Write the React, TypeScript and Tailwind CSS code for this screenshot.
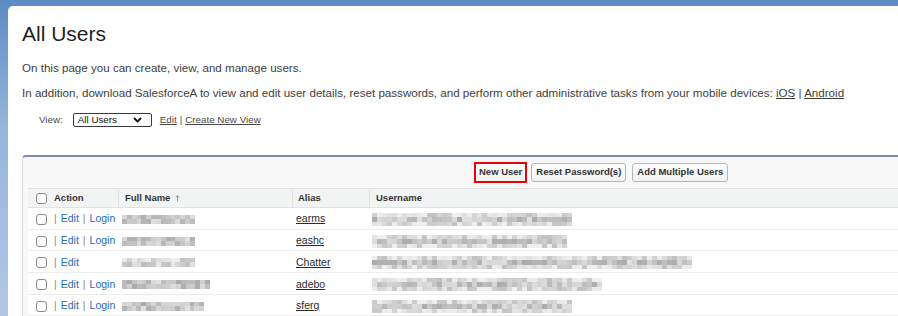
const users = [
  { login: true, alias: "earms", nameW: 73, userW: 200, seed: 3, light: false },
  { login: true, alias: "eashc", nameW: 73, userW: 195, seed: 7, light: false },
  { login: false, alias: "Chatter", nameW: 73, userW: 320, seed: 11, light: true },
  { login: true, alias: "adebo", nameW: 88, userW: 230, seed: 19, light: false },
  { login: true, alias: "sferg", nameW: 82, userW: 200, seed: 23, light: false },
];

// cheap deterministic noise so the blurred names look the same every render
function noise(seed: number, i: number) {
  const x = Math.sin(seed * 97.13 + i * 12.9898) * 43758.5453;
  return x - Math.floor(x);
}

function Pixels({ width, seed, bands, light }: { width: number; seed: number; bands: number[]; light: boolean }) {
  const cols = Math.ceil(width / 5);
  return (
    <div className="flex blur-[0.7px]" style={{ width }}>
      {Array.from({ length: cols }).map((_, c) => (
        <div key={c} className="flex flex-col w-[5px]">
          {bands.map((h, b) => {
            const edge = bands.length === 3 && b !== 1;
            let g = 170 + Math.round(noise(seed, c * 3 + b) * 55);
            if (edge) g = Math.min(238, g + 22);
            if (light) g = Math.min(238, g + 18);
            return <div key={b} style={{ height: h, backgroundColor: `rgb(${g},${g},${g})` }} />;
          })}
        </div>
      ))}
    </div>
  );
}

function Checkbox() {
  return <span className="inline-block w-[11px] h-[11px] border border-[#8a8a8a] rounded-[3px] bg-white" />;
}

export default function App() {
  return (
    <div className="w-[898px] h-[316px] overflow-hidden bg-linear-to-b from-[#5b8bc3] via-[#97b5da] via-40% to-[#b2c7e4] pt-[6px] pl-[8px] font-['Liberation_Sans',Arial,sans-serif]">
      <div className="h-full bg-white rounded-tl-[5px] pl-[14px] pt-[14px]">
        <h1 className="text-[21px] leading-[28px] text-[#1f1f1f]">All Users</h1>
        <p className="mt-[12px] text-[11.6px] leading-[16px] text-[#3e3e3c]">
          On this page you can create, view, and manage users.
        </p>
        <p className="mt-[9px] text-[11.6px] leading-[16px] text-[#3e3e3c]">
          In addition, download SalesforceA to view and edit user details, reset passwords, and perform other
          administrative tasks from your mobile devices: <a className="underline">iOS</a> |{" "}
          <a className="underline">Android</a>
        </p>

        <div className="mt-[12px] ml-[16px] flex items-center h-[14px] text-[9.8px] text-[#4a4a4a]">
          <span className="ml-[1px]">View:</span>
          <div className="ml-[10px] w-[79px] h-[14px] border border-[#3a3a3a] rounded-[2px] flex items-center justify-between pl-[4px] pr-[9px] text-[#111]">
            <span>All Users</span>
            <svg width="9" height="6" viewBox="0 0 9 6">
              <polyline points="1,1 4.5,4.5 8,1" fill="none" stroke="#111" strokeWidth="1.8" />
            </svg>
          </div>
          <a className="ml-[8px] underline">Edit</a>
          <span className="mx-[3px]">|</span>
          <a className="underline">Create New View</a>
        </div>

        <div className="mt-[28px] border-t-2 border-l border-t-[#7e8ba8] border-l-[#dde0e4] rounded-tl-[4px] bg-[#f8f8f8] pl-[5px]">
          <div className="flex items-center pl-[446px] pt-[5px] pb-[5px] h-[31px] text-[9.5px] font-bold text-[#333]">
            <button className="h-[21px] px-[3px] border-2 border-[#e8000b] bg-linear-to-b from-white to-[#f1f1f1]">
              New User
            </button>
            <button className="ml-[4px] h-[19px] px-[4px] border border-[#b5b5b5] rounded-[3px] bg-linear-to-b from-white to-[#f1f1f1]">
              Reset Password(s)
            </button>
            <button className="ml-[6px] h-[19px] px-[4px] border border-[#b5b5b5] rounded-[3px] bg-linear-to-b from-white to-[#f1f1f1]">
              Add Multiple Users
            </button>
          </div>

          <div className="flex h-[20px] pt-[1px] bg-[#f2f3f3] border-y border-[#e0e3e5] text-[9.5px] font-bold text-[#333]">
            <div className="w-[90px] flex items-center pl-[8px]">
              <Checkbox />
              <span className="ml-[7px]">Action</span>
            </div>
            <div className="w-[174px] flex items-center pl-[6px] border-l border-[#e0e3e5]">
              <span>Full Name</span>
              <svg className="ml-[5px]" width="5" height="7" viewBox="0 0 5 7">
                <path d="M2.5 0.5 L2.5 6.5 M0.8 2.3 L2.5 0.5 L4.2 2.3" fill="none" stroke="#9a9a9a" strokeWidth="1" />
              </svg>
            </div>
            <div className="w-[77px] flex items-center pl-[5px] border-l border-[#e0e3e5]">Alias</div>
            <div className="flex-1 flex items-center pl-[6px] border-l border-[#e0e3e5]">Username</div>
          </div>

          {users.map((u) => (
            <div key={u.alias} className="flex h-[21.7px] pt-[2px] bg-white border-b border-[#ececec] text-[10.5px]">
              <div className="w-[90px] flex items-center pl-[8px]">
                <Checkbox />
                <span className="ml-[7px] text-[#888]">|</span>
                <a className="ml-[4px] text-[#1f6cb7]">Edit</a>
                {u.login && (
                  <>
                    <span className="ml-[4px] text-[#888]">|</span>
                    <a className="ml-[4px] text-[#1f6cb7]">Login</a>
                  </>
                )}
              </div>
              <div className="w-[174px] flex items-center pl-[4px]">
                <Pixels width={u.nameW} seed={u.seed} bands={[4, 5]} light={u.light} />
              </div>
              <div className="w-[77px] flex items-center pl-[4px]">
                <a className="underline text-[#2b2b2b]">{u.alias}</a>
              </div>
              <div className="flex-1 flex items-center pl-[3px]">
                <Pixels width={u.userW} seed={u.seed + 5} bands={[4, 5, 4]} light={false} />
              </div>
            </div>
          ))}
        </div>
      </div>
    </div>
  );
}
